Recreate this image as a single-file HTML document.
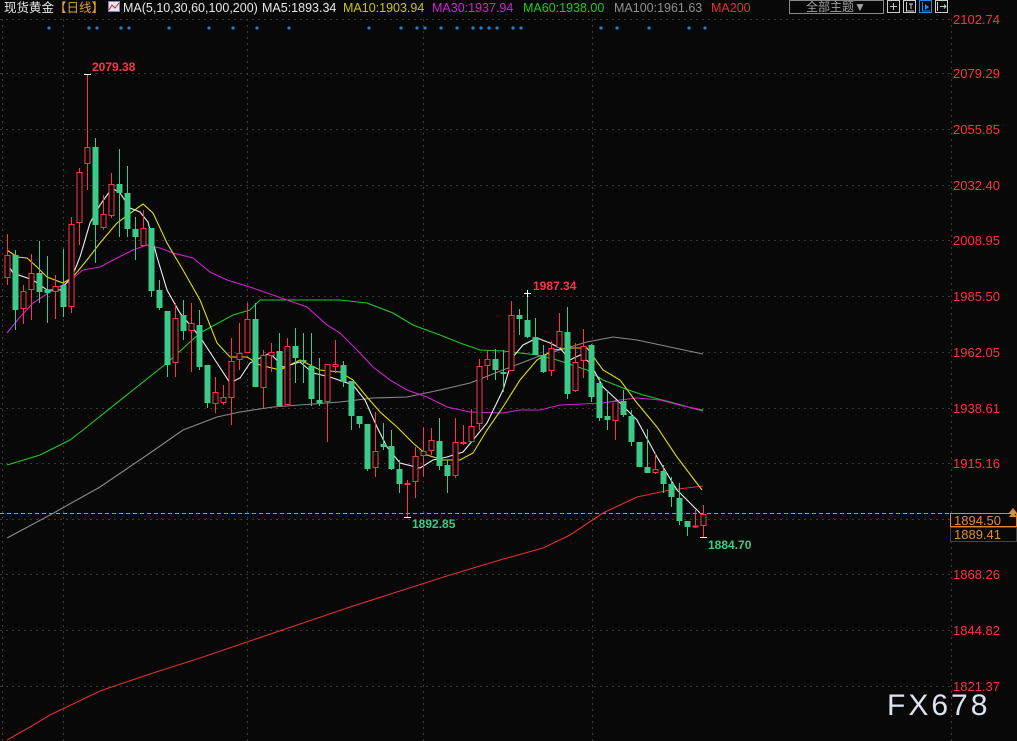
<!DOCTYPE html>
<html><head><meta charset="utf-8"><style>
html,body{margin:0;padding:0;background:#080808;}
body{width:1017px;height:741px;overflow:hidden;position:relative;font-family:"Liberation Sans","Noto Sans CJK SC",sans-serif;}
svg{position:absolute;left:0;top:0;}
</style></head><body>
<svg width="1017" height="741" viewBox="0 0 1017 741" xmlns="http://www.w3.org/2000/svg">
<rect width="1017" height="741" fill="#080808"/>
<g stroke="#3a3a3a" stroke-width="1" stroke-dasharray="2,4">
<line x1="0" y1="19.5" x2="951" y2="19.5"/>
<line x1="0" y1="73.5" x2="951" y2="73.5"/>
<line x1="0" y1="129.5" x2="951" y2="129.5"/>
<line x1="0" y1="185.5" x2="951" y2="185.5"/>
<line x1="0" y1="240.5" x2="951" y2="240.5"/>
<line x1="0" y1="296.5" x2="951" y2="296.5"/>
<line x1="0" y1="352.5" x2="951" y2="352.5"/>
<line x1="0" y1="408.5" x2="951" y2="408.5"/>
<line x1="0" y1="463.5" x2="951" y2="463.5"/>
<line x1="0" y1="519.5" x2="951" y2="519.5"/>
<line x1="0" y1="574.5" x2="951" y2="574.5"/>
<line x1="0" y1="630.5" x2="951" y2="630.5"/>
<line x1="0" y1="686.5" x2="951" y2="686.5"/>
<line x1="2.5" y1="19" x2="2.5" y2="741"/>
<line x1="63.5" y1="19" x2="63.5" y2="741"/>
<line x1="247.5" y1="19" x2="247.5" y2="741"/>
<line x1="423.5" y1="19" x2="423.5" y2="741"/>
<line x1="592.5" y1="19" x2="592.5" y2="741"/>
<line x1="951.5" y1="19" x2="951.5" y2="741"/>
</g>
<g fill="#1e7fd0">
<circle cx="49" cy="28" r="1.6"/><circle cx="89" cy="28" r="1.6"/><circle cx="97" cy="28" r="1.6"/><circle cx="121" cy="28" r="1.6"/><circle cx="129" cy="28" r="1.6"/><circle cx="169" cy="28" r="1.6"/><circle cx="209" cy="28" r="1.6"/><circle cx="233" cy="28" r="1.6"/><circle cx="257" cy="28" r="1.6"/><circle cx="289" cy="28" r="1.6"/><circle cx="369" cy="28" r="1.6"/><circle cx="401" cy="28" r="1.6"/><circle cx="417" cy="28" r="1.6"/><circle cx="425" cy="28" r="1.6"/><circle cx="441" cy="28" r="1.6"/><circle cx="457" cy="28" r="1.6"/><circle cx="473" cy="28" r="1.6"/><circle cx="481" cy="28" r="1.6"/><circle cx="489" cy="28" r="1.6"/><circle cx="497" cy="28" r="1.6"/><circle cx="513" cy="28" r="1.6"/><circle cx="521" cy="28" r="1.6"/><circle cx="601" cy="28" r="1.6"/><circle cx="617" cy="28" r="1.6"/><circle cx="649" cy="28" r="1.6"/><circle cx="689" cy="28" r="1.6"/><circle cx="705" cy="28" r="1.6"/>
</g>
<line x1="0" y1="513.5" x2="951" y2="513.5" stroke="#e08a30" stroke-dasharray="4,3"/>
<g fill="none" stroke-width="1.1">
<polyline stroke="#e03030" points="7,740 30,727 50,715 75,703 100,691 150,674 200,658 250,641 300,624 350,607 400,591 450,575 500,560 543,548 570,535 603,513 637,497 670,490 703,486"/>
<polyline stroke="#8a8a8a" points="7,538 50,515 100,487 150,453 183,430 217,417 240,412 273,407 340,402 373,398 407,397 440,390 470,383 503,370 537,357 570,347 587,342 613,337 637,340 670,347 703,354"/>
<polyline stroke="#22c822" points="7,465 40,455 70,440 83,430 133,390 167,363 200,333 233,315 250,310 260,300 340,300 367,303 393,313 413,325 440,335 460,343 480,350 503,351 537,355 557,360 587,370 603,380 623,388 643,395 670,402 703,411"/>
<polyline stroke="#d020d0" points="7,333 20,317 33,303 53,290 67,283 83,270 100,267 117,258 133,250 147,245 160,248 173,253 193,258 210,272 227,280 250,287 287,300 307,307 327,325 340,333 357,350 373,367 390,380 407,390 427,397 447,407 470,412 503,413 520,410 540,410 560,405 603,403 620,400 637,398 660,400 683,406 703,410"/>
<polyline stroke="#e0e000" points="7,250 17,257 27,258 37,267 47,277 63,283 73,277 87,260 100,243 117,223 143,204 153,213 167,243 183,270 200,300 217,343 230,357 247,357 260,365 280,370 300,360 320,370 340,372 353,380 367,397 380,412 397,427 413,443 427,455 443,460 460,460 473,453 487,430 503,407 520,380 537,360 553,350 570,348 587,348 603,370 620,380 637,403 657,427 677,457 702,490"/>
<polyline stroke="#eeeeee" points="7,263 13,273 33,280 47,290 60,290 72,277 80,257 90,223 100,205 112,188 120,193 130,208 140,212 148,222 157,257 167,290 180,313 200,337 217,363 230,383 240,378 250,363 270,353 283,367 300,362 313,373 330,377 353,385 365,400 377,427 387,447 400,463 420,468 433,460 447,457 463,452 473,440 487,423 503,390 513,357 523,345 537,338 550,343 560,348 570,360 580,355 590,363 603,387 617,400 637,420 657,457 677,490 700,513"/>
</g>
<g stroke="#3dc987" fill="#3dc987">
<line x1="15.5" y1="250" x2="15.5" y2="330"/><rect x="12.5" y="255" width="6" height="55" stroke="none"/>
<line x1="39.5" y1="241" x2="39.5" y2="303"/><rect x="36.5" y="273" width="6" height="19" stroke="none"/>
<line x1="47.5" y1="256" x2="47.5" y2="323"/><rect x="44.5" y="290" width="6" height="3" stroke="none"/>
<line x1="63.5" y1="249" x2="63.5" y2="317"/><rect x="60.5" y="285" width="6" height="22" stroke="none"/>
<line x1="95.5" y1="138" x2="95.5" y2="263"/><rect x="92.5" y="147" width="6" height="78" stroke="none"/>
<line x1="119.5" y1="149" x2="119.5" y2="237"/><rect x="116.5" y="184" width="6" height="9" stroke="none"/>
<line x1="127.5" y1="166" x2="127.5" y2="237"/><rect x="124.5" y="193" width="6" height="36" stroke="none"/>
<line x1="135.5" y1="217" x2="135.5" y2="260"/><rect x="132.5" y="229" width="6" height="8" stroke="none"/>
<line x1="151.5" y1="228" x2="151.5" y2="297"/><rect x="148.5" y="228" width="6" height="63" stroke="none"/>
<line x1="159.5" y1="280" x2="159.5" y2="310"/><rect x="156.5" y="290" width="6" height="18" stroke="none"/>
<line x1="167.5" y1="311" x2="167.5" y2="377"/><rect x="164.5" y="311" width="6" height="54" stroke="none"/>
<line x1="183.5" y1="300" x2="183.5" y2="340"/><rect x="180.5" y="315" width="6" height="16" stroke="none"/>
<line x1="199.5" y1="310" x2="199.5" y2="370"/><rect x="196.5" y="325" width="6" height="42" stroke="none"/>
<line x1="207.5" y1="365" x2="207.5" y2="408"/><rect x="204.5" y="365" width="6" height="38" stroke="none"/>
<line x1="255.5" y1="303" x2="255.5" y2="387"/><rect x="252.5" y="319" width="6" height="68" stroke="none"/>
<line x1="279.5" y1="333" x2="279.5" y2="406"/><rect x="276.5" y="351" width="6" height="55" stroke="none"/>
<line x1="295.5" y1="328" x2="295.5" y2="383"/><rect x="292.5" y="346" width="6" height="12" stroke="none"/>
<line x1="303.5" y1="333" x2="303.5" y2="383"/><rect x="300.5" y="360" width="6" height="2" stroke="none"/>
<line x1="311.5" y1="333" x2="311.5" y2="406"/><rect x="308.5" y="366" width="6" height="33" stroke="none"/>
<line x1="319.5" y1="358" x2="319.5" y2="406"/><rect x="316.5" y="400" width="6" height="3" stroke="none"/>
<line x1="343.5" y1="361" x2="343.5" y2="387"/><rect x="340.5" y="365" width="6" height="17" stroke="none"/>
<line x1="351.5" y1="381" x2="351.5" y2="430"/><rect x="348.5" y="381" width="6" height="35" stroke="none"/>
<line x1="359.5" y1="416" x2="359.5" y2="428"/><rect x="356.5" y="416" width="6" height="8" stroke="none"/>
<line x1="367.5" y1="424" x2="367.5" y2="471"/><rect x="364.5" y="424" width="6" height="45" stroke="none"/>
<line x1="383.5" y1="423" x2="383.5" y2="450"/><rect x="380.5" y="444" width="6" height="3" stroke="none"/>
<line x1="391.5" y1="430" x2="391.5" y2="470"/><rect x="388.5" y="446" width="6" height="23" stroke="none"/>
<line x1="399.5" y1="460" x2="399.5" y2="493"/><rect x="396.5" y="469" width="6" height="15" stroke="none"/>
<line x1="439.5" y1="418" x2="439.5" y2="470"/><rect x="436.5" y="441" width="6" height="25" stroke="none"/>
<line x1="447.5" y1="460" x2="447.5" y2="493"/><rect x="444.5" y="465" width="6" height="11" stroke="none"/>
<line x1="495.5" y1="349" x2="495.5" y2="380"/><rect x="492.5" y="359" width="6" height="11" stroke="none"/>
<line x1="503.5" y1="350" x2="503.5" y2="392"/><rect x="500.5" y="372" width="6" height="2" stroke="none"/>
<line x1="519.5" y1="309" x2="519.5" y2="335"/><rect x="516.5" y="315" width="6" height="4" stroke="none"/>
<line x1="527.5" y1="293" x2="527.5" y2="338"/><rect x="524.5" y="320" width="6" height="17" stroke="none"/>
<line x1="535.5" y1="318" x2="535.5" y2="355"/><rect x="532.5" y="337" width="6" height="18" stroke="none"/>
<line x1="543.5" y1="345" x2="543.5" y2="373"/><rect x="540.5" y="355" width="6" height="17" stroke="none"/>
<line x1="567.5" y1="307" x2="567.5" y2="399"/><rect x="564.5" y="332" width="6" height="62" stroke="none"/>
<line x1="591.5" y1="344" x2="591.5" y2="402"/><rect x="588.5" y="345" width="6" height="52" stroke="none"/>
<line x1="599.5" y1="377" x2="599.5" y2="421"/><rect x="596.5" y="383" width="6" height="35" stroke="none"/>
<line x1="607.5" y1="390" x2="607.5" y2="430"/><rect x="604.5" y="416" width="6" height="4" stroke="none"/>
<line x1="623.5" y1="390" x2="623.5" y2="417"/><rect x="620.5" y="401" width="6" height="14" stroke="none"/>
<line x1="631.5" y1="410" x2="631.5" y2="446"/><rect x="628.5" y="416" width="6" height="26" stroke="none"/>
<line x1="639.5" y1="442" x2="639.5" y2="467"/><rect x="636.5" y="442" width="6" height="25" stroke="none"/>
<line x1="647.5" y1="429" x2="647.5" y2="473"/><rect x="644.5" y="467" width="6" height="6" stroke="none"/>
<line x1="663.5" y1="465" x2="663.5" y2="493"/><rect x="660.5" y="471" width="6" height="13" stroke="none"/>
<line x1="671.5" y1="477" x2="671.5" y2="507"/><rect x="668.5" y="484" width="6" height="13" stroke="none"/>
<line x1="679.5" y1="483" x2="679.5" y2="525"/><rect x="676.5" y="498" width="6" height="23" stroke="none"/>
<line x1="687.5" y1="521" x2="687.5" y2="536"/><rect x="684.5" y="521" width="6" height="6" stroke="none"/>
</g>
<g stroke="#ff3346" fill="#080808">
<line x1="7.5" y1="234" x2="7.5" y2="285"/><rect x="5" y="255.5" width="5" height="22"/>
<line x1="23.5" y1="285" x2="23.5" y2="324"/><rect x="21" y="291.5" width="5" height="17"/>
<line x1="31.5" y1="254" x2="31.5" y2="320"/><rect x="29" y="273.5" width="5" height="16"/>
<line x1="55.5" y1="275" x2="55.5" y2="319"/><rect x="53" y="286.5" width="5" height="5"/>
<line x1="71.5" y1="217" x2="71.5" y2="313"/><rect x="69" y="224.5" width="5" height="82"/>
<line x1="79.5" y1="168" x2="79.5" y2="245"/><rect x="77" y="172.5" width="5" height="50"/>
<line x1="87.5" y1="74" x2="87.5" y2="190"/><rect x="85" y="147.5" width="5" height="16"/>
<line x1="103.5" y1="195" x2="103.5" y2="230"/><rect x="101" y="214.5" width="5" height="13"/>
<line x1="111.5" y1="173" x2="111.5" y2="218"/><rect x="109" y="184.5" width="5" height="31"/>
<line x1="143.5" y1="210" x2="143.5" y2="246"/><rect x="141" y="228.5" width="5" height="17"/>
<line x1="175.5" y1="303" x2="175.5" y2="377"/><rect x="173" y="318.5" width="5" height="44"/>
<line x1="191.5" y1="303" x2="191.5" y2="372"/><rect x="189" y="323.5" width="5" height="7"/>
<line x1="215.5" y1="377" x2="215.5" y2="413"/><rect x="213" y="392.5" width="5" height="11"/>
<line x1="223.5" y1="385" x2="223.5" y2="405"/><rect x="221" y="397.5" width="5" height="5"/>
<line x1="231.5" y1="338" x2="231.5" y2="425"/><rect x="229" y="361.5" width="5" height="36"/>
<line x1="239.5" y1="323" x2="239.5" y2="370"/><rect x="237" y="353.5" width="5" height="6"/>
<line x1="247.5" y1="303" x2="247.5" y2="353"/><rect x="245" y="319.5" width="5" height="33"/>
<line x1="263.5" y1="350" x2="263.5" y2="408"/><rect x="261" y="355.5" width="5" height="32"/>
<line x1="271.5" y1="343" x2="271.5" y2="372"/><rect x="269" y="352.5" width="5" height="3"/>
<line x1="287.5" y1="338" x2="287.5" y2="405"/><rect x="285" y="346.5" width="5" height="58"/>
<line x1="327.5" y1="364" x2="327.5" y2="442"/><rect x="325" y="364.5" width="5" height="37"/>
<line x1="335.5" y1="340" x2="335.5" y2="373"/><rect x="333" y="364.5" width="5" height="2"/>
<line x1="375.5" y1="412" x2="375.5" y2="477"/><rect x="373" y="451.5" width="5" height="16"/>
<line x1="407.5" y1="480" x2="407.5" y2="517"/><rect x="405" y="483.5" width="5" height="1"/>
<line x1="415.5" y1="447" x2="415.5" y2="498"/><rect x="413" y="456.5" width="5" height="25"/>
<line x1="423.5" y1="427" x2="423.5" y2="477"/><rect x="421" y="451.5" width="5" height="4"/>
<line x1="431.5" y1="428" x2="431.5" y2="455"/><rect x="429" y="440.5" width="5" height="10"/>
<line x1="455.5" y1="418" x2="455.5" y2="478"/><rect x="453" y="442.5" width="5" height="33"/>
<line x1="463.5" y1="425" x2="463.5" y2="445"/><rect x="461" y="442.5" width="5" height="1"/>
<line x1="471.5" y1="409" x2="471.5" y2="442"/><rect x="469" y="426.5" width="5" height="15"/>
<line x1="479.5" y1="359" x2="479.5" y2="430"/><rect x="477" y="366.5" width="5" height="57"/>
<line x1="487.5" y1="350" x2="487.5" y2="380"/><rect x="485" y="359.5" width="5" height="6"/>
<line x1="511.5" y1="301" x2="511.5" y2="371"/><rect x="509" y="315.5" width="5" height="55"/>
<line x1="551.5" y1="341" x2="551.5" y2="376"/><rect x="549" y="348.5" width="5" height="22"/>
<line x1="559.5" y1="313" x2="559.5" y2="348"/><rect x="557" y="331.5" width="5" height="16"/>
<line x1="575.5" y1="343" x2="575.5" y2="392"/><rect x="573" y="362.5" width="5" height="28"/>
<line x1="583.5" y1="329" x2="583.5" y2="378"/><rect x="581" y="346.5" width="5" height="14"/>
<line x1="615.5" y1="400" x2="615.5" y2="440"/><rect x="613" y="401.5" width="5" height="19"/>
<line x1="655.5" y1="453" x2="655.5" y2="474"/><rect x="653" y="469.5" width="5" height="3"/>
<line x1="695.5" y1="510" x2="695.5" y2="528"/><rect x="693" y="526" width="5" height="1"/>
<line x1="703.5" y1="505" x2="703.5" y2="537"/><rect x="701" y="514.5" width="5" height="11"/>
</g>
<g stroke="#ffffff" stroke-width="1">
<line x1="84" y1="74.5" x2="91" y2="74.5"/>
<line x1="524" y1="293.5" x2="531" y2="293.5"/><line x1="527.5" y1="290" x2="527.5" y2="297"/>
<line x1="404" y1="517.5" x2="411" y2="517.5"/>
<line x1="700" y1="537.5" x2="707" y2="537.5"/>
</g>
<g font-family="Liberation Sans, sans-serif" font-size="12" font-weight="bold">
<text x="92" y="71" fill="#ff3346">2079.38</text>
<text x="533" y="290" fill="#ff3346">1987.34</text>
<text x="412" y="528" fill="#3dc987">1892.85</text>
<text x="708" y="549" fill="#3dc987">1884.70</text>
</g>
<g font-family="Liberation Sans, sans-serif" font-size="13" fill="#ff3040">
<text x="953" y="24">2102.74</text>
<text x="953" y="78">2079.29</text>
<text x="953" y="134">2055.85</text>
<text x="953" y="190">2032.40</text>
<text x="953" y="245">2008.95</text>
<text x="953" y="301">1985.50</text>
<text x="953" y="357">1962.05</text>
<text x="953" y="413">1938.61</text>
<text x="953" y="468">1915.16</text>
<text x="953" y="579">1868.26</text>
<text x="953" y="635">1844.82</text>
<text x="953" y="691">1821.37</text>
</g>
<rect x="950.5" y="513.5" width="66" height="13" fill="#080808" stroke="#e08a30"/>
<rect x="950.5" y="527.5" width="66" height="14" fill="#080808" stroke="#444"/>
<text x="954" y="525" font-family="Liberation Sans, sans-serif" font-size="13" fill="#e08a30">1894.50</text>
<text x="954" y="539" font-family="Liberation Sans, sans-serif" font-size="13" fill="#e08a30">1889.41</text>
<path d="M1009 513 L1013 508 L1017 513 Z M1009 517 L1013 512 L1017 517 Z" fill="#e08a30"/>
<g font-family="Liberation Sans, Noto Sans CJK SC, sans-serif" font-size="12.5">
<text x="4" y="12" fill="#e8e8e8">现货黄金</text>
<text x="54" y="12" fill="#e0a040">【日线】</text>
<text x="123" y="12" fill="#e8e8e8">MA(5,10,30,60,100,200)</text>
<text x="262" y="12" fill="#e8e8e8">MA5:1893.34</text>
<text x="343" y="12" fill="#c8c800">MA10:1903.94</text>
<text x="432" y="12" fill="#d020d0">MA30:1937.94</text>
<text x="523" y="12" fill="#22c822">MA60:1938.00</text>
<text x="614" y="12" fill="#909090">MA100:1961.63</text>
<text x="711" y="12" fill="#e03030">MA200</text>
</g>
<rect x="108.5" y="1.5" width="11" height="10" fill="#e8e8f8" stroke="#8080c0"/>
<polyline points="109,10 112,5 115,8 119,3" fill="none" stroke="#d02020" stroke-width="1"/>
<rect x="789.5" y="0.5" width="94" height="13" fill="none" stroke="#888"/>
<text x="806" y="11" font-family="Liberation Sans, Noto Sans CJK SC, sans-serif" font-size="12" fill="#a0a0a0">全部主题▼</text>
<g fill="none" stroke="#cccccc">
<rect x="887.5" y="0.5" width="12" height="12"/>
<rect x="903.5" y="0.5" width="12" height="12"/>
<rect x="919.5" y="0.5" width="12" height="12" stroke="#2a8ae0"/>
<rect x="935.5" y="0.5" width="12" height="12"/>
<path d="M893.5 3 V10 M890 6.5 H897"/>
<path d="M906.5 2 V11 H914 M909 4 H913 M911 4 V9"/>
<path d="M922.5 2 V11 H930" stroke="#2a8ae0"/>
<path d="M937.5 2 V11 M940 6.5 H946 M944 4.5 L946 6.5 L944 8.5"/>
</g>
<path d="M925 4 L929 7 L925 10 Z" fill="#2a8ae0"/>
<text x="887" y="715" font-family="Liberation Sans, sans-serif" font-size="30" letter-spacing="3" fill="#dde4ee">FX678</text>
</svg>
</body></html>
